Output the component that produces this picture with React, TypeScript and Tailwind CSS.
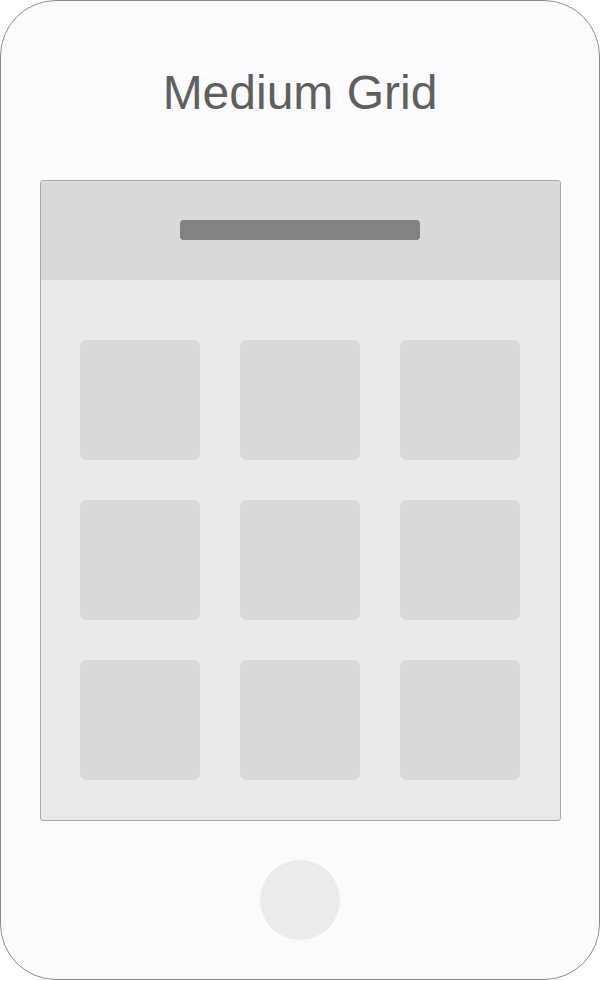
import React from "react";

const tiles = Array.from({ length: 9 }, (_, i) => i);

const App = () => {
  return (
    <div className="w-[601px] h-[981px] bg-white" style={{ fontFamily: '"Liberation Sans", Arial, sans-serif' }}>
      <div className="box-border w-[600px] h-[980px] border border-[#8e8e8e] rounded-[56px] bg-[#fbfafc] flex flex-col items-center">
        <h1 className="mt-[68px] text-[48px] leading-none text-[#5f5f5f] font-normal">Medium Grid</h1>

        <div className="mt-[63px] box-border w-[521px] h-[641px] border border-[#a9a9a9] rounded-[3px] overflow-hidden flex flex-col bg-[#e9e9e9]">
          <div className="h-[99px] bg-[#d9d9db] flex justify-center shrink-0">
            <div className="mt-[39px] w-[240px] h-[20px] rounded-[4px] bg-[#818085]" />
          </div>
          <div className="grid grid-cols-[120px_120px_120px] gap-[40px] pt-[60px] pl-[39px]">
            {tiles.map((t) => (
              <div key={t} className="w-[120px] h-[120px] rounded-[7px] bg-[#d9d9db]" />
            ))}
          </div>
        </div>

        <div className="mt-[39px] w-[80px] h-[80px] rounded-full bg-[#ebeaee]" />
      </div>
    </div>
  );
};

export default App;
